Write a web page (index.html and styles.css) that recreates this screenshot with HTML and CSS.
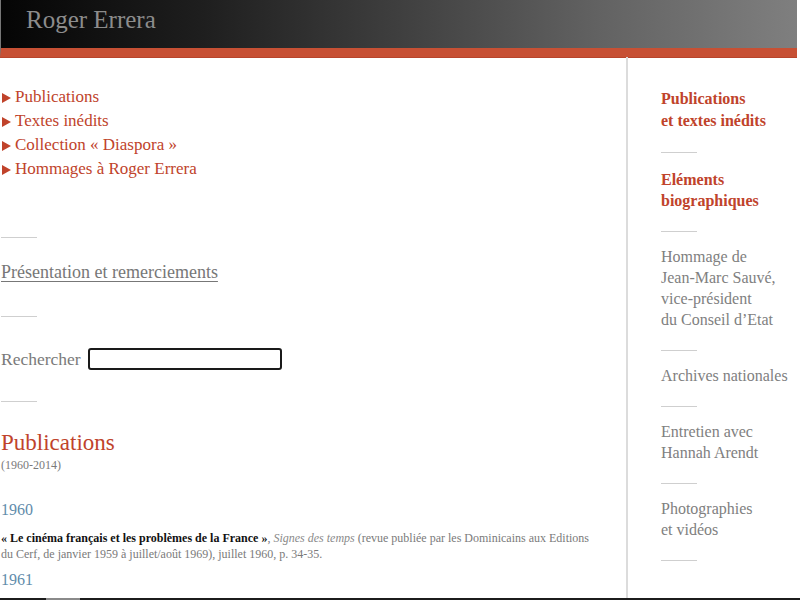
FILE: index.html
```html
<!DOCTYPE html>
<html lang="fr">
<head>
  <meta charset="UTF-8" />
  <title>Roger Errera</title>
  <link rel="stylesheet" href="styles.css">
</head>
<body>
  <div class="page">
    <div class="header">
      <div class="site-title">Roger Errera</div>
    </div>

    <div class="columns">
      <div class="main">
        <ul class="menu">
          <li><a href="#">Publications</a></li>
          <li><a href="#">Textes inédits</a></li>
          <li><a href="#">Collection « Diaspora »</a></li>
          <li><a href="#">Hommages à Roger Errera</a></li>
        </ul>

        <div class="rule rule-menu"></div>
        <a class="presentation" href="#">Présentation et remerciements</a>
        <div class="rule rule-pres"></div>

        <div class="search">
          <label for="q">Rechercher</label>
          <input type="text" id="q">
        </div>

        <div class="rule rule-search"></div>

        <h1 class="section-title">Publications</h1>
        <div class="section-dates">(1960-2014)</div>

        <h2 class="year">1960</h2>
        <p class="entry"><b>« Le cinéma français et les problèmes de la France »</b>, <i>Signes des temps</i> (revue publiée par les Dominicains aux Editions du Cerf, de janvier 1959 à juillet/août 1969), juillet 1960, p. 34-35.</p>
        <h2 class="year year-next">1961</h2>
      </div>

      <div class="side">
        <a class="side-item hot" href="#">Publications<br>et textes inédits</a>
        <div class="rule"></div>
        <a class="side-item hot second" href="#">Eléments<br>biographiques</a>
        <div class="rule"></div>
        <a class="side-item" href="#">Hommage de<br>Jean-Marc Sauvé,<br>vice-président<br>du Conseil d’Etat</a>
        <div class="rule"></div>
        <a class="side-item" href="#">Archives nationales</a>
        <div class="rule"></div>
        <a class="side-item" href="#">Entretien avec<br>Hannah Arendt</a>
        <div class="rule"></div>
        <a class="side-item" href="#">Photographies<br>et vidéos</a>
        <div class="rule"></div>
      </div>
    </div>
  </div>

  <div class="scrollbar"><div class="thumb"></div></div>
</body>
</html>
```

FILE: styles.css
```css
body {
  margin: 0;
  font-family: "Liberation Serif", "DejaVu Serif", serif;
  background-color: #fff;
  overflow: hidden;
}

a {
  text-decoration: none;
}

.page {
  width: 797px;
}

.header {
  height: 48px;
  background: linear-gradient(to right, #050505 0%, #1e1e1e 25%, #3f3f3f 50%, #626262 75%, #7f7f7f 100%);
  border-bottom: 9px solid #c75034;
  box-shadow: 0 1px 0 #b8452c;
  border-left: 1px solid #777;
}

.site-title {
  color: #8c8c8c;
  font-size: 25px;
  line-height: 28px;
  padding: 6px 0 0 25px;
}

.columns {
  display: flex;
}

.main {
  width: 626px;
  padding: 28px 0 0 1px;
  box-sizing: border-box;
}

.menu {
  list-style: none;
  margin: 0;
  padding: 0;
}

.menu li {
  font-size: 17px;
  line-height: 24px;
  display: flex;
  align-items: center;
}

.menu li::before {
  content: "";
  border-left: 9px solid #c0432b;
  border-top: 5px solid transparent;
  border-bottom: 5px solid transparent;
  margin: 1px 4px 0 1px;
}

.menu a {
  color: #c0432b;
}

.rule {
  width: 36px;
  height: 1px;
  background-color: #cfcfcf;
}

.rule-menu {
  margin: 56px 0 22px;
}

.presentation {
  display: block;
  width: max-content;
  font-size: 18px;
  line-height: 24px;
  color: #777;
  text-decoration: underline;
  text-underline-offset: 3px;
}

.rule-pres {
  margin: 32px 0 31px;
}

.search {
  display: flex;
  align-items: center;
  height: 22px;
}

.search label {
  font-size: 17.5px;
  color: #7a7a7a;
  margin-right: 7px;
}

.search input {
  width: 194px;
  height: 22px;
  box-sizing: border-box;
  border: 2px solid #1a1a1a;
  border-radius: 3px;
  padding: 0 3px;
  font-size: 14px;
  outline: none;
}

.rule-search {
  margin: 31px 0 27px;
}

.section-title {
  margin: 0;
  font-size: 23px;
  line-height: 28px;
  font-weight: normal;
  color: #c0432b;
}

.section-dates {
  font-size: 12px;
  line-height: 16px;
  color: #7a7a7a;
}

.year {
  margin: 27px 0 0;
  font-size: 16px;
  line-height: 20px;
  font-weight: normal;
  color: #5f8cab;
}

.year-next {
  margin-top: 8px;
}

.entry {
  margin: 10px 0 0;
  font-size: 12px;
  line-height: 16px;
  color: #7a7a7a;
  width: 600px;
}

.entry b {
  color: #111;
}

.entry i {
  color: #8a8a8a;
}

.side {
  width: 171px;
  border-left: 2px solid #dcdcdc;
  padding: 31px 0 0 33px;
  min-height: 543px;
  box-sizing: border-box;
}

.side-item {
  display: block;
  font-size: 16px;
  line-height: 21px;
  color: #808080;
}

.side-item.hot {
  color: #c0432b;
  font-weight: bold;
  line-height: 22px;
}

.side-item.second {
  padding-top: 2px;
  line-height: 21px;
}

.side .rule {
  margin: 20px 0 14px;
}

.scrollbar {
  position: fixed;
  left: 0;
  right: 0;
  bottom: 0;
  height: 2px;
  background-color: #1c1c1c;
}

.thumb {
  width: 34px;
  height: 2px;
  margin-left: 46px;
  background-color: #8a8a8a;
}
```
